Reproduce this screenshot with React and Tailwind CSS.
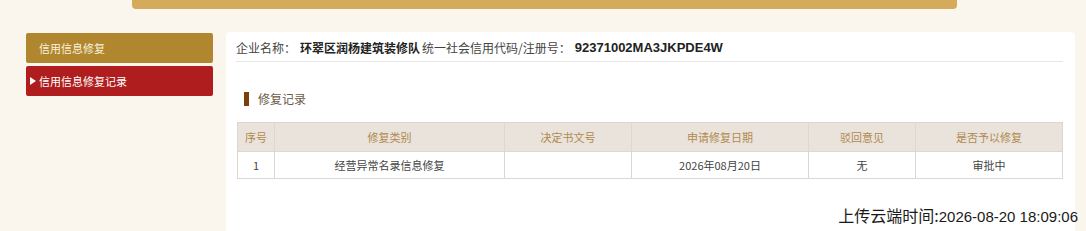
export default function App() {
  const cols = [
    { w: 37, h: "序号", v: "1" },
    { w: 230, h: "修复类别", v: "经营异常名录信息修复" },
    { w: 127, h: "决定书文号", v: "" },
    { w: 177, h: "申请修复日期", v: "2026年08月20日" },
    { w: 107, h: "驳回意见", v: "无" },
    { w: 147, h: "是否予以修复", v: "审批中" },
  ];
  const font = { fontFamily: '"Noto Sans CJK SC", "Liberation Sans", sans-serif' };
  return (
    <div
      className="relative w-full h-[231px] overflow-hidden bg-[#faf6ee]"
      style={font}
    >
      <div className="ml-[132px] w-[825px] h-[9px] rounded-b-[4px] bg-[#d4aa5b]" />
      <div className="flex mt-[23px] h-[200px]">
        <div className="ml-[26px] w-[187px] mt-[1px] flex flex-col gap-[3px]">
          <div className="h-[30px] flex items-center pl-[13px] rounded-[2px] bg-[#b0872f] text-[11px] text-[#fbf1da]">
            信用信息修复
          </div>
          <div className="h-[30px] flex items-center pl-[4px] rounded-[2px] bg-[#b01d1e] text-[11px] text-white">
            <span className="inline-block w-0 h-0 border-y-[4px] border-y-transparent border-l-[6px] border-l-white mr-[3px]" />
            信用信息修复记录
          </div>
        </div>
        <div className="ml-[13px] w-[849px] bg-white rounded-t-[4px] pl-[10px] pr-[12px]">
          <div className="h-[30px] pt-[2px] flex items-center border-b border-[#e6e6e6] text-[12px] text-[#333]">
            <span className="text-[#444]">企业名称：</span>
            <span className="ml-[4px] font-bold text-[#222]">环翠区润杨建筑装修队</span>
            <span className="ml-[2px] text-[#444]">统一社会信用代码/注册号：</span>
            <span
              className="ml-[4px] font-bold text-[13px] text-[#222]"
              style={{ fontFamily: '"Liberation Sans", sans-serif' }}
            >
              92371002MA3JKPDE4W
            </span>
          </div>
          <div className="mt-[30px] h-[14px] flex items-center">
            <span className="ml-[8px] w-[5px] h-[14px] bg-[#7b3f0c]" />
            <span className="ml-[9px] text-[12px] text-[#6b5a48]">修复记录</span>
          </div>
          <table className="mt-[16px] ml-[1px] border-collapse text-[11px]">
            <thead>
              <tr className="bg-[#e9e3dc] h-[29px]">
                {cols.map((c) => (
                  <th
                    key={c.h}
                    style={{ width: c.w }}
                    className="border border-[#ddd7d0] font-normal text-[#b08a4e] p-0"
                  >
                    {c.h}
                  </th>
                ))}
              </tr>
            </thead>
            <tbody>
              <tr className="h-[27px]">
                {cols.map((c) => (
                  <td
                    key={c.h}
                    className="border border-[#ddd7d0] text-center text-[#444] p-0"
                  >
                    {c.v}
                  </td>
                ))}
              </tr>
            </tbody>
          </table>
        </div>
      </div>
      <div className="absolute right-[8px] bottom-[3px] text-[16px] text-[#1a1a1a] leading-[22px] whitespace-nowrap">
        上传云端时间:
        <span style={{ fontFamily: '"Liberation Sans", sans-serif' }} className="text-[15px]">
          2026-08-20 18:09:06
        </span>
      </div>
    </div>
  );
}
